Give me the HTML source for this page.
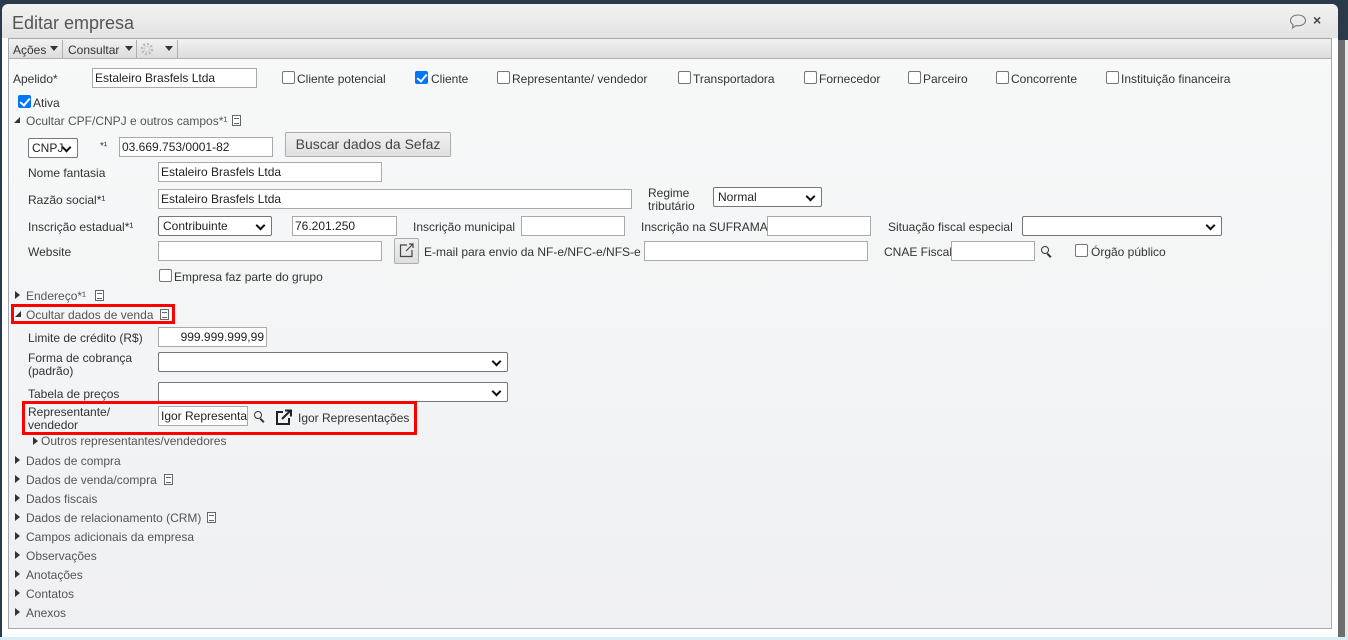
<!DOCTYPE html>
<html><head><meta charset="utf-8"><style>
*{box-sizing:border-box;margin:0;padding:0}
body{width:1348px;height:640px;overflow:hidden;background:#d9edf5;font-family:"Liberation Sans",sans-serif;font-size:12px;color:#333;position:relative}
.a{position:absolute;white-space:nowrap}
.t{position:absolute;white-space:nowrap;line-height:14px}
.in{position:absolute;background:#fff;border:1px solid #a9a9a9;height:20px;padding:2px 2px;line-height:14px;white-space:nowrap;overflow:hidden;color:#222}
.sel{position:absolute;background:#fff;border:1px solid #767676;border-radius:2px;height:20px;padding:2px 4px;line-height:14px;color:#222}
.sel:after{content:"";position:absolute;right:7px;top:5px;width:5px;height:5px;border-right:2px solid #111;border-bottom:2px solid #111;transform:rotate(45deg)}
.cb{position:absolute;width:13px;height:13px;border:1px solid #767676;border-radius:2px;background:#fff}
.ck{position:absolute;width:13px;height:13px;border-radius:2px;background:#0075ff}
.ck:after{content:"";position:absolute;left:4px;top:1px;width:4px;height:8px;border-right:2px solid #fff;border-bottom:2px solid #fff;transform:rotate(40deg)}
.tr{position:absolute;width:0;height:0;border-top:4px solid transparent;border-bottom:4px solid transparent;border-left:5px solid #333}
.td{position:absolute;width:0;height:0;border-left:6px solid transparent;border-bottom:6px solid #333}
.doc{position:absolute;width:9px;height:11px;border:1px solid #666;background:#fff}
.doc:after{content:"";position:absolute;left:1px;top:2px;width:5px;height:4px;border-top:1px solid #666;border-bottom:1px solid #666}
.mag{position:absolute;width:8px;height:8px;border:1.5px solid #333;border-radius:50%}
.mag:after{content:"";position:absolute;left:6px;top:6px;width:5px;height:2px;background:#333;transform:rotate(45deg);transform-origin:0 0}
.red{position:absolute;border:3px solid #f00}
</style></head><body>
<div class="a" style="left:0;top:0;width:1348px;height:637px;background:#2b3a4a"></div>
<div class="a" style="left:1338px;top:40px;width:10px;height:597px;background:#6e6e6e"></div>
<div class="a" style="left:1345px;top:40px;width:3px;height:597px;background:#e8e8e8"></div>
<div class="a" style="left:2px;top:4px;width:1336px;height:633px;background:linear-gradient(#f2f2f2,#e3e3e3 34px,#fff 34px);border-radius:6px 6px 0 0"></div>
<div class="t" style="left:12px;top:13px;font-size:18px;line-height:20px;color:#555">Editar empresa</div>
<svg class="a" style="left:1289px;top:14px" width="18" height="15" viewBox="0 0 18 15"><path d="M9 1C4.5 1 1.5 3.5 1.5 6.5c0 1.8 1 3.2 2.6 4.1L3.5 14l3.6-2.4c.6.1 1.2.2 1.9.2 4.5 0 7.5-2.5 7.5-5.3S13.5 1 9 1z" fill="none" stroke="#777" stroke-width="1.1"/></svg>
<div class="t" style="left:1313px;top:13px;font-size:14px;font-weight:bold;color:#444">×</div>
<div class="a" style="left:8px;top:38px;width:1324px;height:591px;border:1px solid #a3a9b0;background:linear-gradient(#f7f9f9,#eff0f2)"></div>
<div class="a" style="left:9px;top:39px;width:1322px;height:20px;background:linear-gradient(#f2f2f2,#dcdcdc);border-bottom:1px solid #b0b0b0"></div>
<div class="t" style="left:13px;top:43px">Ações</div><div class="a" style="left:50px;top:46px;border-left:4px solid transparent;border-right:4px solid transparent;border-top:5px solid #333"></div>
<div class="a" style="left:62px;top:40px;width:1px;height:18px;background:#b0b0b0"></div>
<div class="t" style="left:68px;top:43px">Consultar</div><div class="a" style="left:125px;top:46px;border-left:4px solid transparent;border-right:4px solid transparent;border-top:5px solid #333"></div>
<div class="a" style="left:136px;top:40px;width:1px;height:18px;background:#b0b0b0"></div>
<svg class="a" style="left:139px;top:41px" width="16" height="16" viewBox="0 0 16 16"><circle cx="8" cy="8" r="5" fill="none" stroke="#bbb" stroke-width="2.5" stroke-dasharray="2 1.9"/><circle cx="8" cy="8" r="2.5" fill="none" stroke="#ccc"/></svg>
<div class="a" style="left:165px;top:46px;border-left:4px solid transparent;border-right:4px solid transparent;border-top:5px solid #333"></div>
<div class="a" style="left:177px;top:40px;width:1px;height:18px;background:#b0b0b0"></div>

<div class="t" style="left:13px;top:72px">Apelido*</div>
<div class="in" style="left:92px;top:68px;width:165px">Estaleiro Brasfels Ltda</div>
<div class="cb" style="left:282px;top:71px"></div><div class="t" style="left:297px;top:72px">Cliente potencial</div>
<div class="ck" style="left:415px;top:71px"></div><div class="t" style="left:431px;top:72px">Cliente</div>
<div class="cb" style="left:497px;top:71px"></div><div class="t" style="left:512px;top:72px">Representante/ vendedor</div>
<div class="cb" style="left:678px;top:71px"></div><div class="t" style="left:693px;top:72px">Transportadora</div>
<div class="cb" style="left:804px;top:71px"></div><div class="t" style="left:819px;top:72px">Fornecedor</div>
<div class="cb" style="left:908px;top:71px"></div><div class="t" style="left:923px;top:72px">Parceiro</div>
<div class="cb" style="left:996px;top:71px"></div><div class="t" style="left:1011px;top:72px">Concorrente</div>
<div class="cb" style="left:1106px;top:71px"></div><div class="t" style="left:1121px;top:72px">Instituição financeira</div>
<div class="ck" style="left:18px;top:95px"></div><div class="t" style="left:33px;top:96px">Ativa</div>

<div class="td" style="left:14px;top:117px"></div><div class="t" style="left:26px;top:114px;color:#555">Ocultar CPF/CNPJ e outros campos*¹</div><div class="doc" style="left:232px;top:115px"></div>
<div class="sel" style="left:28px;top:138px;width:50px;padding-left:3px">CNPJ</div>
<div class="t" style="left:100px;top:140px;font-size:10px">*¹</div>
<div class="in" style="left:119px;top:137px;width:154px">03.669.753/0001-82</div>
<div class="a" style="left:285px;top:132px;width:166px;height:25px;border:1px solid #adadad;border-radius:2px;background:linear-gradient(#f0f0f0,#e0e0e0);font-size:14px;line-height:23px;text-align:center;color:#444">Buscar dados da Sefaz</div>
<div class="t" style="left:28px;top:166px">Nome fantasia</div>
<div class="in" style="left:158px;top:162px;width:224px">Estaleiro Brasfels Ltda</div>
<div class="t" style="left:28px;top:193px">Razão social*¹</div>
<div class="in" style="left:158px;top:189px;width:474px">Estaleiro Brasfels Ltda</div>
<div class="t" style="left:648px;top:187px;line-height:13px">Regime<br>tributário</div>
<div class="sel" style="left:713px;top:187px;width:109px">Normal</div>
<div class="t" style="left:28px;top:220px">Inscrição estadual*¹</div>
<div class="sel" style="left:158px;top:216px;width:114px">Contribuinte</div>
<div class="in" style="left:292px;top:216px;width:105px">76.201.250</div>
<div class="t" style="left:413px;top:220px">Inscrição municipal</div>
<div class="in" style="left:521px;top:216px;width:104px"></div>
<div class="t" style="left:641px;top:220px">Inscrição na SUFRAMA</div>
<div class="in" style="left:767px;top:216px;width:104px"></div>
<div class="t" style="left:888px;top:220px">Situação fiscal especial</div>
<div class="sel" style="left:1022px;top:216px;width:200px"></div>
<div class="t" style="left:28px;top:245px">Website</div>
<div class="in" style="left:158px;top:241px;width:224px"></div>
<div class="a" style="left:394px;top:238px;width:25px;height:26px;border:1px solid #adadad;border-radius:2px;background:linear-gradient(#f0f0f0,#dedede)"></div>
<svg class="a" style="left:398px;top:242px" width="17" height="17" viewBox="0 0 17 17"><path d="M9 3H2.5v11.5H14V8" fill="none" stroke="#444" stroke-width="1.2"/><path d="M8 9l7-7M11 2h4v4" fill="none" stroke="#444" stroke-width="1.2"/></svg>
<div class="t" style="left:424px;top:245px">E-mail para envio da NF-e/NFC-e/NFS-e</div>
<div class="in" style="left:644px;top:241px;width:224px"></div>
<div class="t" style="left:884px;top:245px">CNAE Fiscal</div>
<div class="in" style="left:951px;top:241px;width:84px"></div>
<div class="mag" style="left:1041px;top:246px"></div>
<div class="cb" style="left:1075px;top:244px"></div><div class="t" style="left:1091px;top:245px">Órgão público</div>
<div class="cb" style="left:159px;top:269px"></div><div class="t" style="left:174px;top:270px">Empresa faz parte do grupo</div>

<div class="tr" style="left:15px;top:291px"></div><div class="t" style="left:26px;top:289px;color:#555">Endereço*¹</div><div class="doc" style="left:95px;top:290px"></div>
<div class="red" style="left:11px;top:304px;width:164px;height:20px"></div>
<div class="td" style="left:15px;top:311px"></div><div class="t" style="left:26px;top:308px;color:#555">Ocultar dados de venda</div><div class="doc" style="left:160px;top:309px"></div>
<div class="t" style="left:28px;top:331px">Limite de crédito (R$)</div>
<div class="in" style="left:158px;top:327px;width:109px;text-align:right">999.999.999,99</div>
<div class="t" style="left:28px;top:352px;line-height:13px">Forma de cobrança<br>(padrão)</div>
<div class="sel" style="left:158px;top:352px;width:350px"></div>
<div class="t" style="left:28px;top:387px">Tabela de preços</div>
<div class="sel" style="left:158px;top:382px;width:350px"></div>
<div class="red" style="left:22px;top:401px;width:395px;height:34px"></div>
<div class="t" style="left:28px;top:406px;line-height:13px">Representante/<br>vendedor</div>
<div class="in" style="left:158px;top:406px;width:90px">Igor Representações</div>
<div class="mag" style="left:254px;top:411px"></div>
<svg class="a" style="left:275px;top:409px" width="18" height="17" viewBox="0 0 18 17"><path d="M8 3H2v12h12V9" fill="none" stroke="#222" stroke-width="2"/><path d="M7 10l8-8M10 1.5h6v6" fill="none" stroke="#222" stroke-width="2"/></svg>
<div class="t" style="left:298px;top:411px">Igor Representações</div>
<div class="tr" style="left:33px;top:437px"></div><div class="t" style="left:41px;top:434px;color:#555">Outros representantes/vendedores</div>

<div class="tr" style="left:15px;top:456px"></div><div class="t" style="left:26px;top:454px;color:#555">Dados de compra</div>
<div class="tr" style="left:15px;top:475px"></div><div class="t" style="left:26px;top:473px;color:#555">Dados de venda/compra</div><div class="doc" style="left:164px;top:474px"></div>
<div class="tr" style="left:15px;top:494px"></div><div class="t" style="left:26px;top:492px;color:#555">Dados fiscais</div>
<div class="tr" style="left:15px;top:513px"></div><div class="t" style="left:26px;top:511px;color:#555">Dados de relacionamento (CRM)</div><div class="doc" style="left:207px;top:512px"></div>
<div class="tr" style="left:15px;top:532px"></div><div class="t" style="left:26px;top:530px;color:#555">Campos adicionais da empresa</div>
<div class="tr" style="left:15px;top:551px"></div><div class="t" style="left:26px;top:549px;color:#555">Observações</div>
<div class="tr" style="left:15px;top:570px"></div><div class="t" style="left:26px;top:568px;color:#555">Anotações</div>
<div class="tr" style="left:15px;top:589px"></div><div class="t" style="left:26px;top:587px;color:#555">Contatos</div>
<div class="tr" style="left:15px;top:608px"></div><div class="t" style="left:26px;top:606px;color:#555">Anexos</div>
</body></html>
